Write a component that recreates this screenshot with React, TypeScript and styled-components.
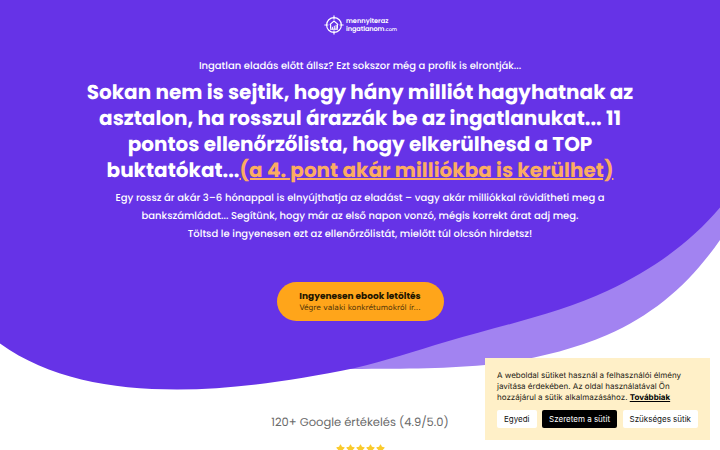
import React from 'react';
import styled, { createGlobalStyle } from 'styled-components';
import { FaStar } from 'react-icons/fa';

const GlobalStyle = createGlobalStyle`
  * {
    box-sizing: border-box;
  }

  body {
    margin: 0;
    background: #ffffff;
    font-family: 'Poppins', 'Open Sans', sans-serif;
    text-rendering: geometricPrecision;
    overflow: hidden;
  }
`;

const Page = styled.div`
  position: relative;
  height: 450px;
  overflow: hidden;
`;

const Wave = styled.svg`
  position: absolute;
  top: 0;
  left: 0;
  width: 720px;
  height: 400px;
`;

const Hero = styled.header`
  position: relative;
  height: 400px;
  padding-top: 13px;
  display: flex;
  flex-direction: column;
  align-items: center;
  text-align: center;
  color: white;
`;

const Logo = styled.div`
  display: flex;
  align-items: center;
  gap: 2px;
  height: 24px;
  margin-left: 1px;
  text-align: left;

  svg {
    width: 20px;
    height: 20px;
  }
`;

const LogoText = styled.div`
  padding-top: 1px;
  font-size: 6.6px;
  line-height: 8px;
  font-weight: 600;

  small {
    font-size: 5px;
    font-weight: 500;
  }
`;

const Domain = styled.span`
  letter-spacing: -0.1px;
`;

const Lead = styled.p`
  margin: 20px 0 0;
  font-size: 10px;
  line-height: 18px;
  font-weight: 500;
`;

const Title = styled.h1`
  margin: 4px 0 0;
  width: 560px;
  font-size: 20px;
  line-height: 26px;
  font-weight: 700;
`;

const Highlight = styled.span`
  color: #fbac62;
  text-decoration: underline;
`;

const Description = styled.p`
  margin: 6px 0 0;
  font-size: 10px;
  line-height: 18px;
  font-weight: 500;
`;

const CtaButton = styled.button`
  margin-top: 38.5px;
  width: 167px;
  height: 39px;
  padding: 1px 0 0;
  border: 0;
  border-radius: 20px;
  background: #ffa51a;
  color: #201400;
  display: flex;
  flex-direction: column;
  align-items: center;
  justify-content: center;
  font-family: inherit;
  font-size: 9px;
  line-height: 12px;
  font-weight: 700;
`;

const CtaNote = styled.span`
  font-family: 'DejaVu Sans', sans-serif;
  font-size: 7.5px;
  line-height: 11px;
  font-weight: 400;
  color: #4f3308;
`;

const Reviews = styled.section`
  display: flex;
  flex-direction: column;
  align-items: center;
  padding-top: 14px;
`;

const ReviewText = styled.p`
  margin: 0;
  font-size: 11.5px;
  line-height: 18px;
  color: #6a6a6a;
`;

const Stars = styled.div`
  display: flex;
  gap: 1px;
  margin-top: 12px;
  color: #fbcb2c;
  font-size: 9px;
`;

const CookieBar = styled.aside`
  position: absolute;
  right: 10px;
  bottom: 10px;
  width: 225px;
  height: 82px;
  padding: 12px;
  background: #fff0c8;
  color: #1c1a14;
  font-family: 'Inter', sans-serif;
  font-size: 8px;
  line-height: 11px;

  p {
    margin: 0;
  }

  a {
    color: #000000;
    font-weight: 700;
    text-decoration: underline;
  }
`;

const CookieActions = styled.div`
  display: flex;
  justify-content: space-between;
  margin-top: 7px;
`;

const CookieButton = styled.button<{ $primary?: boolean }>`
  height: 18px;
  padding: 0 7px;
  border: 0;
  border-radius: 2px;
  background: ${({ $primary }) => ($primary ? '#000000' : '#ffffff')};
  color: ${({ $primary }) => ($primary ? '#ffffff' : '#111111')};
  font-family: inherit;
  font-size: 8px;
  white-space: nowrap;
`;

const LogoMark: React.FC = () => (
    <svg viewBox="0 0 20 20" fill="none" stroke="white" strokeWidth="1.2">
        <circle cx="10" cy="10" r="7.4" />
        <path d="M10 0.4v4M10 15.6v4M0.4 10h4M15.6 10h4" />
        <path d="M5.8 9.6 10 6l4.2 3.6M6.6 9.4v4.4M13.4 9.4v4.4" />
        <path d="M8.4 14.4v-2.6M10.3 14.4v-3.6M12.1 14.4V9.8M6 14.2h8" strokeWidth="1" />
    </svg>
);

const App: React.FC = () => {
    return (
        <Page>
            <GlobalStyle />
            <Wave viewBox="0 0 720 400">
                <path
                    fill="#a283f1"
                    d="M340 369C400 368.700 440 369 485 365C530 360.500 570 350.500 607 335C655 314 690 283 720 240V190H340Z"
                />
                <path
                    fill="#6633e7"
                    d="M0 0H720V207.500C690 243 652 270 607 291C560 313 500 326 447 341.500C415 351 385 361 355 368C290 381 235 389.500 177 389.500C110 389.500 48 378 0 343.500Z"
                />
            </Wave>

            <Hero>
                <Logo>
                    <LogoMark />
                    <LogoText>
                        mennyiteraz
                        <br />
                        <Domain>ingatlanom</Domain>
                        <small>.com</small>
                    </LogoText>
                </Logo>
                <Lead>Ingatlan eladás előtt állsz? Ezt sokszor még a profik is elrontják...</Lead>
                <Title>
                    Sokan nem is sejtik, hogy hány milliót hagyhatnak az asztalon, ha rosszul árazzák be az
                    ingatlanukat... 11 pontos ellenőrzőlista, hogy elkerülhesd a TOP buktatókat...
                    <Highlight>(a 4. pont akár milliókba is kerülhet)</Highlight>
                </Title>
                <Description>
                    Egy rossz ár akár 3–6 hónappal is elnyújthatja az eladást – vagy akár milliókkal rövidítheti meg a
                    <br />
                    bankszámládat... Segítünk, hogy már az első napon vonzó, mégis korrekt árat adj meg.
                    <br />
                    Töltsd le ingyenesen ezt az ellenőrzőlistát, mielőtt túl olcsón hirdetsz!
                </Description>
                <CtaButton>
                    Ingyenesen ebook letöltés
                    <CtaNote>Végre valaki konkrétumokról ír...</CtaNote>
                </CtaButton>
            </Hero>

            <Reviews>
                <ReviewText>120+ Google értékelés (4.9/5.0)</ReviewText>
                <Stars>
                    {[1, 2, 3, 4, 5].map((n) => (
                        <FaStar key={n} />
                    ))}
                </Stars>
            </Reviews>

            <CookieBar>
                <p>
                    A weboldal sütiket használ a felhasználói élmény javítása érdekében. Az oldal használatával Ön
                    hozzájárul a sütik alkalmazásához. <a>Továbbiak</a>
                </p>
                <CookieActions>
                    <CookieButton>Egyedi</CookieButton>
                    <CookieButton $primary>Szeretem a sütit</CookieButton>
                    <CookieButton>Szükséges sütik</CookieButton>
                </CookieActions>
            </CookieBar>
        </Page>
    );
};

export default App;
